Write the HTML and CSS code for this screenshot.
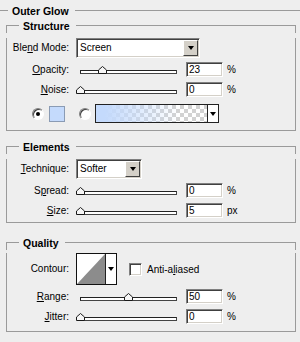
FILE: index.html
```html
<!DOCTYPE html>
<html lang="en">
  <head>
    <meta charset="UTF-8" />
    <meta name="viewport" content="width=device-width, initial-scale=1.0" />
    <title>Outer Glow</title>
    <link rel="stylesheet" href="styles.css">
  </head>
  <body>
    <section class="panel">
      <div class="head"><span class="title">Outer Glow</span></div>

      <div class="group structure">
        <div class="head"><span class="title">Structure</span></div>
        <div class="body">
          <div class="row row-select">
            <label class="lbl">Ble<u>n</u>d Mode:</label>
            <div class="select blend">
              <span class="value">Screen</span>
              <span class="drop"><i class="arrow"></i></span>
            </div>
          </div>
          <div class="row row-slider first">
            <label class="lbl"><u>O</u>pacity:</label>
            <div class="slider">
              <div class="track"></div>
              <svg class="thumb" style="left: 22px" width="9" height="8" viewBox="0 0 9 8"><polygon points="0.5,7.5 0.5,4 4.5,0.5 8.5,4 8.5,7.5" /></svg>
            </div>
            <input class="num" type="text" value="23" />
            <span class="unit">%</span>
          </div>
          <div class="row row-slider">
            <label class="lbl"><u>N</u>oise:</label>
            <div class="slider">
              <div class="track"></div>
              <svg class="thumb" style="left: 0px" width="9" height="8" viewBox="0 0 9 8"><polygon points="0.5,7.5 0.5,4 4.5,0.5 8.5,4 8.5,7.5" /></svg>
            </div>
            <input class="num" type="text" value="0" />
            <span class="unit">%</span>
          </div>
          <div class="row row-color">
            <span class="radio checked"></span>
            <span class="swatch"></span>
            <span class="radio second"></span>
            <div class="gradient">
              <span class="ramp"></span>
              <span class="mini-drop"><i class="arrow"></i></span>
            </div>
          </div>
        </div>
      </div>

      <div class="group elements">
        <div class="head"><span class="title">Elements</span></div>
        <div class="body">
          <div class="row row-select">
            <label class="lbl"><u>T</u>echnique:</label>
            <div class="select technique">
              <span class="value">Softer</span>
              <span class="drop"><i class="arrow"></i></span>
            </div>
          </div>
          <div class="row row-slider first">
            <label class="lbl">S<u>p</u>read:</label>
            <div class="slider">
              <div class="track"></div>
              <svg class="thumb" style="left: 0px" width="9" height="8" viewBox="0 0 9 8"><polygon points="0.5,7.5 0.5,4 4.5,0.5 8.5,4 8.5,7.5" /></svg>
            </div>
            <input class="num" type="text" value="0" />
            <span class="unit">%</span>
          </div>
          <div class="row row-slider">
            <label class="lbl"><u>S</u>ize:</label>
            <div class="slider">
              <div class="track"></div>
              <svg class="thumb" style="left: 0px" width="9" height="8" viewBox="0 0 9 8"><polygon points="0.5,7.5 0.5,4 4.5,0.5 8.5,4 8.5,7.5" /></svg>
            </div>
            <input class="num" type="text" value="5" />
            <span class="unit">px</span>
          </div>
        </div>
      </div>

      <div class="group quality">
        <div class="head"><span class="title">Quality</span></div>
        <div class="body">
          <div class="row row-contour">
            <label class="lbl">Contour:</label>
            <div class="contour">
              <svg class="curve" width="28" height="30" viewBox="0 0 28 30"><polygon points="0,30 28,0 28,30" /></svg>
              <span class="mini-drop"><i class="arrow"></i></span>
            </div>
            <span class="check"></span>
            <span class="check-text">Anti-a<u>l</u>iased</span>
          </div>
          <div class="row row-slider first">
            <label class="lbl"><u>R</u>ange:</label>
            <div class="slider">
              <div class="track"></div>
              <svg class="thumb" style="left: 48px" width="9" height="8" viewBox="0 0 9 8"><polygon points="0.5,7.5 0.5,4 4.5,0.5 8.5,4 8.5,7.5" /></svg>
            </div>
            <input class="num" type="text" value="50" />
            <span class="unit">%</span>
          </div>
          <div class="row row-slider">
            <label class="lbl"><u>J</u>itter:</label>
            <div class="slider">
              <div class="track"></div>
              <svg class="thumb" style="left: 0px" width="9" height="8" viewBox="0 0 9 8"><polygon points="0.5,7.5 0.5,4 4.5,0.5 8.5,4 8.5,7.5" /></svg>
            </div>
            <input class="num" type="text" value="0" />
            <span class="unit">%</span>
          </div>
        </div>
      </div>
    </section>
  </body>
</html>
```

FILE: styles.css
```css
* {
  box-sizing: border-box;
  margin: 0;
  padding: 0;
}

body {
  background-color: #eeeeee;
  font-family: "Liberation Sans", Arial, sans-serif;
  font-size: 10px;
  color: #000;
  width: 300px;
  height: 342px;
  overflow: hidden;
}

/* group box heading: line, title, line */
.head {
  display: flex;
  height: 14px;
}

.head::before,
.head::after {
  content: "";
  height: 7px;
  align-self: flex-end;
  border-top: 1px solid #9a9a9a;
}

.head::after {
  flex: 1;
}

.title {
  font-weight: bold;
  font-size: 10.5px;
  line-height: 14px;
  padding: 0 6px 0 4px;
  white-space: nowrap;
}

.panel {
  margin-top: 4px;
  padding-left: 6px;
}

.panel > .head {
  margin-left: -6px;
}

.panel > .head::before {
  width: 8px;
}

.group {
  width: 290px;
}

.group .head::before {
  width: 12px;
  border-left: 1px solid #9a9a9a;
}

.group .head::after {
  border-right: 1px solid #9a9a9a;
}

.group .body {
  border: 1px solid #9a9a9a;
  border-top: none;
}

.structure {
  margin-top: 1px;
}

.structure .body {
  padding-bottom: 7px;
}

.elements {
  margin-top: 9px;
}

.elements .body {
  padding-bottom: 2px;
}

.quality {
  margin-top: 13px;
}

.quality .body {
  padding-bottom: 5px;
}

.row {
  display: flex;
  align-items: center;
}

.lbl {
  width: 62px;
  flex-shrink: 0;
  text-align: right;
  line-height: 12px;
}

/* dropdowns */
.row-select {
  margin-top: 5px;
  height: 20px;
}

.select {
  margin-left: 7px;
  height: 20px;
  display: flex;
  align-items: center;
  background-color: #fff;
  border: 1px solid;
  border-color: #808080 #fff #fff #808080;
  box-shadow: inset 1px 1px 0 #404040, inset -1px -1px 0 #d4d0c8;
  padding: 1px 1px 1px 2px;
}

.blend {
  width: 124px;
}

.technique {
  width: 66px;
}

.select .value {
  flex: 1;
  padding-left: 1px;
  line-height: 16px;
}

.drop {
  width: 15px;
  height: 16px;
  display: flex;
  align-items: center;
  justify-content: center;
  background-color: #d4d0c8;
  border: 1px solid;
  border-color: #fff #404040 #404040 #fff;
}

.arrow {
  width: 0;
  height: 0;
  border-left: 3px solid transparent;
  border-right: 3px solid transparent;
  border-top: 4px solid #000;
}

/* sliders */
.row-slider {
  height: 19px;
  align-items: stretch;
}

.row-slider .lbl {
  align-self: center;
}

.row-slider.first {
  margin-top: 2px;
}

.row-slider + .row-slider {
  margin-top: 1px;
}

.slider {
  position: relative;
  width: 104px;
  margin-left: 7px;
  padding-top: 10px;
}

.track {
  margin-left: 4px;
  width: 97px;
  height: 4px;
  background-color: #fff;
  border: 1px solid #222;
  border-right-color: #444;
  border-bottom-color: #444;
}

.thumb {
  position: absolute;
  top: 6px;
  display: block;
}

.thumb polygon {
  fill: #f6f6f6;
  stroke: #1a1a1a;
  stroke-width: 1;
}

.num {
  align-self: center;
  width: 37px;
  height: 15px;
  margin-left: 6px;
  padding: 0 1px 0 2px;
  font-family: inherit;
  font-size: 10px;
  color: #000;
  background-color: #fff;
  border: 1px solid;
  border-color: #808080 #fff #fff #808080;
  box-shadow: inset 1px 1px 0 #404040, inset -1px -1px 0 #d4d0c8;
  outline: none;
}

.unit {
  align-self: center;
  margin-left: 4px;
}

/* colour row */
.row-color {
  margin-top: 5px;
  height: 19px;
}

.radio {
  width: 12px;
  height: 12px;
  border-radius: 50%;
  background-color: #fff;
  border: 1px solid;
  border-color: #808080 #fff #fff #808080;
  box-shadow: inset 1px 1px 0 #404040;
  margin-left: 25px;
  display: flex;
  align-items: center;
  justify-content: center;
}

.radio.checked::after {
  content: "";
  width: 4px;
  height: 4px;
  border-radius: 50%;
  background-color: #000;
}

.radio.second {
  margin-left: 14px;
}

.swatch {
  width: 16px;
  height: 16px;
  margin-left: 5px;
  background-color: #c4dafc;
  border: 1px solid #8a9bb4;
}

.gradient {
  width: 124px;
  height: 19px;
  margin-left: 4px;
  display: flex;
  border: 1px solid #222;
  background-color: #fff;
}

.ramp {
  flex: 1;
  background-image:
    linear-gradient(to right, #c4dafc 8%, rgba(196, 218, 252, 0) 75%),
    linear-gradient(45deg, #d2d2d2 25%, transparent 25%, transparent 75%, #d2d2d2 75%),
    linear-gradient(45deg, #d2d2d2 25%, transparent 25%, transparent 75%, #d2d2d2 75%);
  background-size: 100% 100%, 8px 8px, 8px 8px;
  background-position: 0 0, 0 0, 4px 4px;
}

.mini-drop {
  width: 11px;
  display: flex;
  align-items: center;
  justify-content: center;
  border-left: 1px solid #222;
  background-color: #fff;
}

/* contour row */
.row-contour {
  margin-top: 3px;
  height: 32px;
}

.contour {
  margin-left: 7px;
  width: 41px;
  height: 32px;
  display: flex;
  border: 1px solid #111;
  background-color: #fff;
}

.curve {
  display: block;
}

.curve polygon {
  fill: #8c8c8c;
}

.check {
  width: 13px;
  height: 13px;
  margin-left: 12px;
  background-color: #fff;
  border: 1px solid;
  border-color: #808080 #fff #fff #808080;
  box-shadow: inset 1px 1px 0 #404040, inset -1px -1px 0 #d4d0c8;
}

.check-text {
  margin-left: 5px;
}
```
